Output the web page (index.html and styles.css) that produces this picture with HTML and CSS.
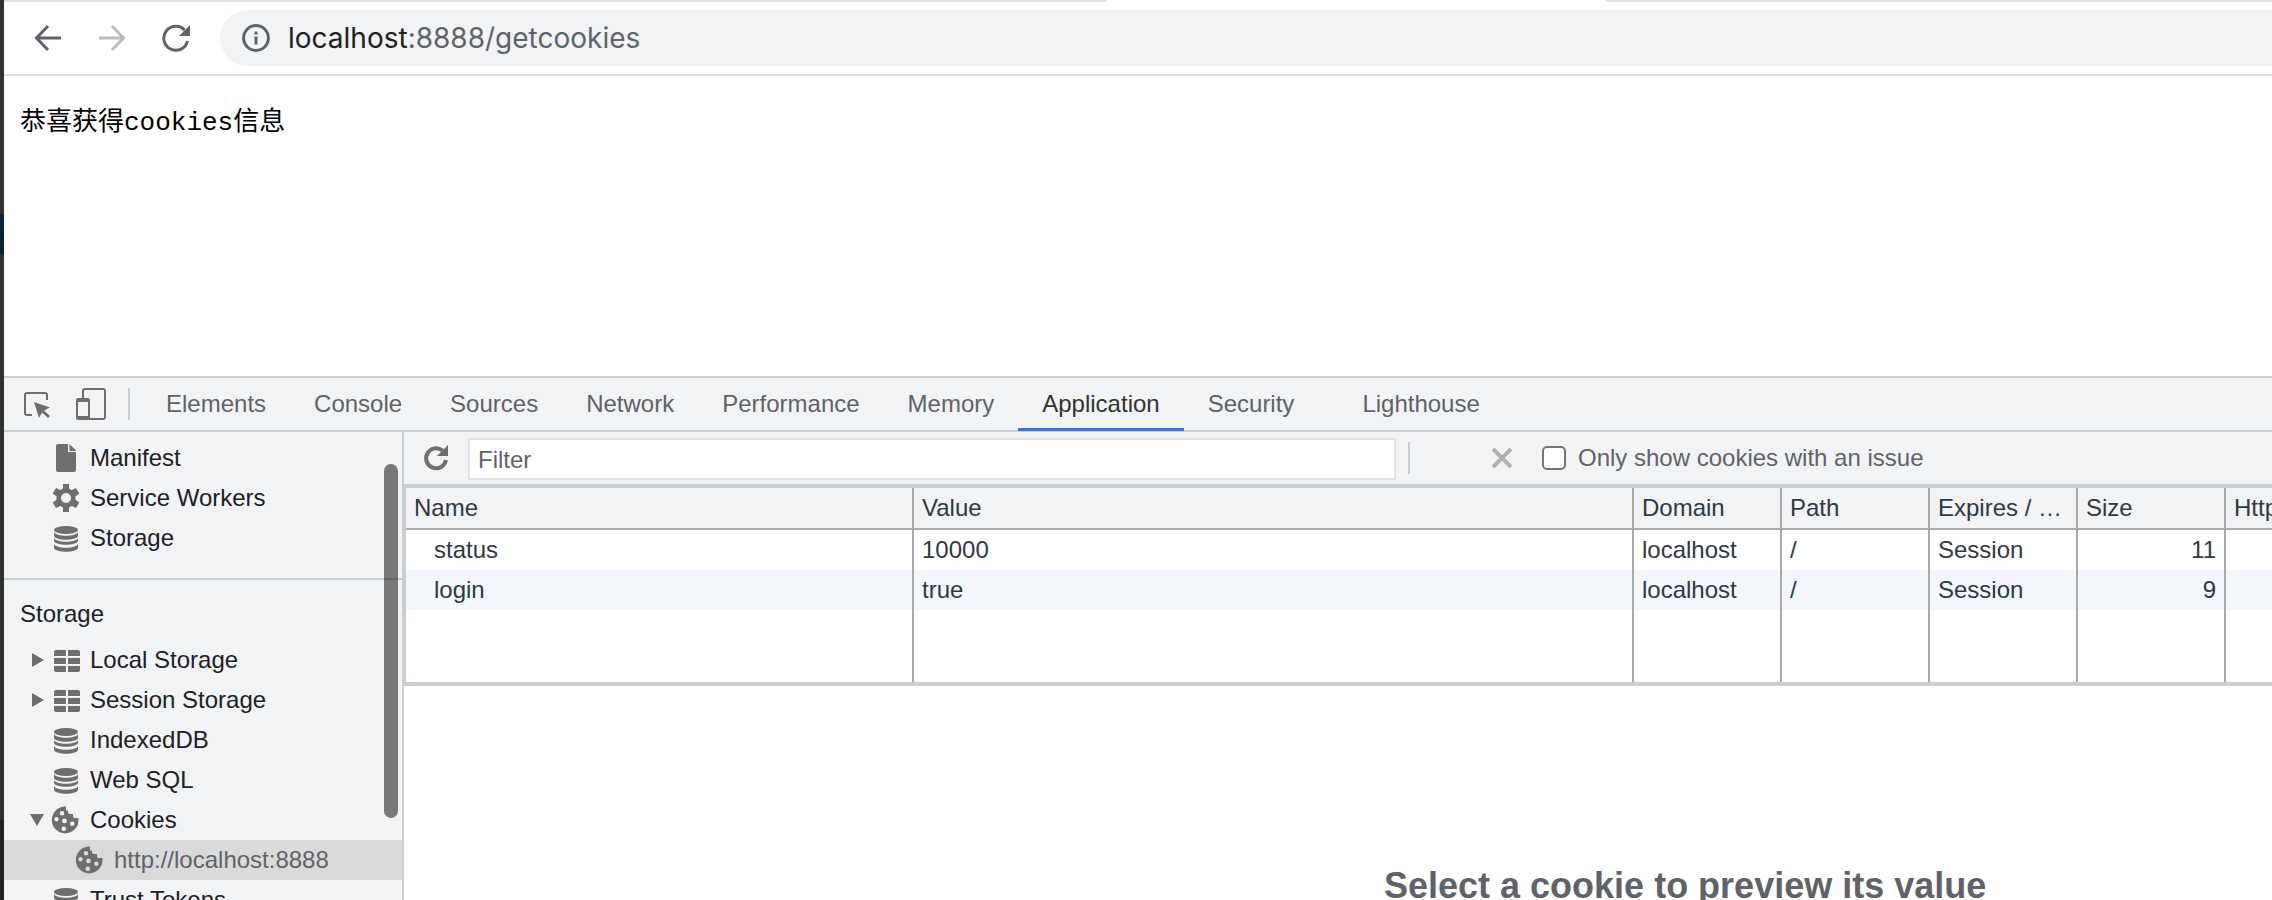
FILE: index.html
```
<!DOCTYPE html>
<html lang="zh-CN">
  <head>
    <meta charset="UTF-8" />
    <meta name="viewport" content="width=device-width, initial-scale=1.0" />
    <title>localhost:8888/getcookies</title>
    <link rel="stylesheet" href="styles.css">
  </head>

  <body>
    <!-- shared icons -->
    <svg class="sprite" aria-hidden="true">
      <symbol id="database" viewBox="0 0 24 26">
        <ellipse cx="12" cy="4" rx="12" ry="4" />
        <path d="M0 6c2 5 22 5 24 0v4c-2 5-22 5-24 0z" />
        <path d="M0 12c2 5 22 5 24 0v3c-2 5-22 5-24 0z" />
        <path d="M0 18c2 5 22 5 24 0v4c-2 5-22 5-24 0z" />
      </symbol>
      <symbol id="table" viewBox="0 0 26 22">
        <path d="M2 0h10v6H0V2q0-2 2-2zM14 0h10q2 0 2 2v4H14zM0 8h12v6H0zM14 8h12v6H14zM0 16h12v6H2q-2 0-2-2zM14 16h12v4q0 2-2 2H14z" />
      </symbol>
      <symbol id="cookie" viewBox="1 0 28 28">
        <path fill-rule="evenodd" d="M15 0.6A13.4 13.4 0 1 0 27.4 12H23q-1 0-1-2V8h-3q-2 0-2-2V4.500h-2zM11 5a2.300 2.300 0 1 1 0 4.600a2.300 2.300 0 1 1 0-4.600zM5.500 11a2.200 2.200 0 1 1 0 4.400a2.200 2.200 0 1 1 0-4.400zM13.500 12.500a2.400 2.400 0 1 1 0 4.800a2.400 2.400 0 1 1 0-4.800zM21.300 15.500a2.200 2.200 0 1 1 0 4.400a2.200 2.200 0 1 1 0-4.400zM12.800 20.500a2.300 2.300 0 1 1 0 4.600a2.300 2.300 0 1 1 0-4.600z" />
      </symbol>
    </svg>

    <div class="desktop"></div>

    <div class="window">
      <div class="tabstrip"><span></span><span></span></div>

      <header class="toolbar">
        <button type="button" class="nav-btn" aria-label="Back">
          <svg width="28" height="28" viewBox="0 0 28 28"><path d="M27 14H3M14 2 2.500 14 14 26" /></svg>
        </button>
        <button type="button" class="nav-btn nav-off" aria-label="Forward" disabled>
          <svg width="28" height="28" viewBox="0 0 28 28"><path d="M1 14h24M14 2l11.500 12L14 26" /></svg>
        </button>
        <button type="button" class="nav-btn" aria-label="Reload">
          <svg width="28" height="28" viewBox="0 0 28 28"><path d="M22.500 6A12 12 0 1 0 25.500 17" /><path class="solid" d="M28 1v11H17z" /></svg>
        </button>
        <div class="omnibox">
          <svg width="28" height="28" viewBox="0 0 28 28"><circle cx="14" cy="14" r="12.400" /><path d="M14 12.500v8M14 7.500v3" /></svg>
          <span class="url"><b>localhost</b>:8888/getcookies</span>
        </div>
      </header>

      <main class="page">
        <pre>恭喜获得cookies信息</pre>
      </main>

      <section class="devtools">
        <nav class="tabs">
          <button type="button" class="tool" aria-label="Inspect">
            <svg width="28" height="28" viewBox="0 0 28 28"><path class="line" d="M10 25H5q-2 0-2-2V5q0-2 2-2h18q2 0 2 2v5" /><path d="M12 12l16 5.500-6 3 6 5.500-2 2-6-5.500-3 5.500z" /></svg>
          </button>
          <button type="button" class="tool" aria-label="Device toolbar">
            <svg width="30" height="32" viewBox="0 0 30 32"><path class="line" d="M7 10V3q0-2 2-2h18q2 0 2 2v26q0 2-2 2H13" /><path fill-rule="evenodd" d="M2 10h10q2 0 2 2v18q0 2-2 2H2q-2 0-2-2V12q0-2 2-2zM2 14v14h10V14z" /></svg>
          </button>
          <i class="divider"></i>
          <button type="button" class="tab">Elements</button>
          <button type="button" class="tab">Console</button>
          <button type="button" class="tab">Sources</button>
          <button type="button" class="tab">Network</button>
          <button type="button" class="tab">Performance</button>
          <button type="button" class="tab">Memory</button>
          <button type="button" class="tab active">Application</button>
          <button type="button" class="tab">Security</button>
          <button type="button" class="tab tab-ext">Lighthouse</button>
        </nav>

        <div class="panels">
          <aside class="sidebar">
            <ul class="tree">
              <li>
                <i class="arrow"></i>
                <svg class="icon" viewBox="0 0 28 28"><path d="M6 0h10v8h8v18q0 2-2 2H6q-2 0-2-2V2q0-2 2-2zM17.500 0L24 6.500V7h-6.500z" /></svg>
                Manifest
              </li>
              <li>
                <i class="arrow"></i>
                <svg class="icon" viewBox="0 0 28 28"><path fill-rule="evenodd" d="M11 0h6v4.500l2.700 1.500 4.300-2 3.300 5.500-3.800 2.700v3.600l3.800 2.700-3.300 5.500-4.300-2-2.700 1.500V28h-6v-4.500L8.300 22 4 24 .7 18.500l3.800-2.700v-3.600L.7 9.500 4 4l4.300 2L11 4.500zM14 9a5 5 0 1 0 0 10a5 5 0 1 0 0-10z" /></svg>
                Service Workers
              </li>
              <li><i class="arrow"></i><svg class="icon"><use href="#database" x="2" y="2" width="24" height="26" /></svg>Storage</li>
            </ul>
            <h2>Storage</h2>
            <ul class="tree">
              <li><i class="arrow closed"></i><svg class="icon"><use href="#table" x="2" y="4" width="26" height="22" /></svg>Local Storage</li>
              <li><i class="arrow closed"></i><svg class="icon"><use href="#table" x="2" y="4" width="26" height="22" /></svg>Session Storage</li>
              <li><i class="arrow"></i><svg class="icon"><use href="#database" x="2" y="2" width="24" height="26" /></svg>IndexedDB</li>
              <li><i class="arrow"></i><svg class="icon"><use href="#database" x="2" y="2" width="24" height="26" /></svg>Web SQL</li>
              <li><i class="arrow open"></i><svg class="icon"><use href="#cookie" width="28" height="28" /></svg>Cookies</li>
              <li class="child selected"><i class="arrow"></i><svg class="icon"><use href="#cookie" width="28" height="28" /></svg>http://localhost:8888</li>
              <li><i class="arrow"></i><svg class="icon"><use href="#database" x="2" y="2" width="24" height="26" /></svg>Trust Tokens</li>
            </ul>
            <div class="thumb"></div>
          </aside>

          <div class="content">
            <div class="filterbar">
              <button type="button" class="tool" aria-label="Refresh">
                <svg width="28" height="28" viewBox="0 0 28 28"><path class="thick" d="M20.500 6.500A10 10 0 1 0 24 16" /><path d="M26 1v11H15z" /></svg>
              </button>
              <input type="text" class="filter" placeholder="Filter" aria-label="Filter" />
              <i class="divider"></i>
              <button type="button" class="tool clear" aria-label="Clear" disabled>
                <svg width="20" height="20" viewBox="0 0 20 20"><path class="thick" d="M1 1l18 18M19 1 1 19" /></svg>
              </button>
              <input type="checkbox" id="issues" />
              <label for="issues">Only show cookies with an issue</label>
            </div>

            <table class="cookies">
              <colgroup>
                <col class="col-name" /><col /><col class="col-sm" /><col class="col-sm" /><col class="col-sm" /><col class="col-sm" /><col class="col-last" />
              </colgroup>
              <thead>
                <tr><th>Name</th><th>Value</th><th>Domain</th><th>Path</th><th>Expires / …</th><th>Size</th><th>HttpOnly</th></tr>
              </thead>
              <tbody>
                <tr><td>status</td><td>10000</td><td>localhost</td><td>/</td><td>Session</td><td class="num">11</td><td></td></tr>
                <tr><td>login</td><td>true</td><td>localhost</td><td>/</td><td>Session</td><td class="num">9</td><td></td></tr>
                <tr class="filler"><td></td><td></td><td></td><td></td><td></td><td></td><td></td></tr>
              </tbody>
            </table>

            <p class="preview">Select a cookie to preview its value</p>
          </div>
        </div>
      </section>
    </div>
  </body>
</html>
```
FILE: styles.css
```
* {
  box-sizing: border-box;
}

body {
  display: flex;
  height: 100vh;
  margin: 0;
  overflow: hidden;
  background: #fff;
  font-family: 'Liberation Sans', 'Noto Sans CJK SC', sans-serif;
  font-size: 24px;
  line-height: 28px;
  color: #202124;
}

button {
  padding: 0;
  border: 0;
  background: none;
  font: inherit;
  color: inherit;
}

svg {
  display: block;
  flex: none;
}

.sprite {
  position: absolute;
  width: 0;
  height: 0;
}

/* sliver of the window behind */
.desktop {
  flex: none;
  width: 4px;
  background: linear-gradient(#2f3030 214px, #0b2233 214px, #0b2233 254px, #2f3030 254px, #2f3030 820px, #24221f 820px);
}

.window {
  flex: 1;
  min-width: 0;
  display: flex;
  flex-direction: column;
}

.tabstrip {
  display: flex;
  justify-content: space-between;
  height: 2px;
}

.tabstrip span {
  width: 1103px;
  background: #dee1e6;
  border-bottom-right-radius: 6px 2px;
}

.tabstrip span:last-child {
  width: 666px;
  border-radius: 0 0 0 6px;
}

/* address bar */
.toolbar {
  display: flex;
  align-items: center;
  gap: 36px;
  height: 74px;
  padding-left: 30px;
  border-bottom: 2px solid #dadce0;
}

.nav-btn svg,
.omnibox svg {
  fill: none;
  stroke: #5f6368;
  stroke-width: 3;
}

.nav-off svg {
  stroke: #babcbe;
}

.nav-btn .solid {
  fill: #5f6368;
  stroke: none;
}

.omnibox {
  flex: 1;
  display: flex;
  align-items: center;
  gap: 18px;
  height: 56px;
  margin-left: -6px;
  padding-left: 22px;
  border-radius: 28px 0 0 28px;
  background: #f1f3f4;
}

.url {
  font-family: Inter, Roboto, sans-serif;
  font-size: 28px;
  line-height: 36px;
  color: #5f6368;
}

.url b {
  font-weight: normal;
  color: #202124;
}

.page {
  height: 300px;
  padding: 0 16px;
}

.page pre {
  margin: 28px 0;
  font-family: 'Liberation Mono', 'Noto Sans CJK SC', monospace;
  font-size: 26px;
  line-height: 38px;
  color: #000;
}

/* devtools */
.devtools {
  flex: 1;
  min-height: 0;
  display: flex;
  flex-direction: column;
  border-top: 2px solid #cacdd1;
}

.tabs {
  flex: none;
  display: flex;
  align-items: center;
  height: 54px;
  padding-left: 18px;
  background: #f1f3f4;
  border-bottom: 2px solid #cacdd1;
}

.tool svg {
  fill: #6e6e6e;
}

.tool .line {
  fill: none;
  stroke: #6e6e6e;
  stroke-width: 2;
}

.tool .thick {
  fill: none;
  stroke: #6e6e6e;
  stroke-width: 4;
}

.tabs .tool + .tool {
  margin-left: 26px;
}

.divider {
  width: 2px;
  height: 32px;
  background: #cacdd1;
}

.tabs .divider {
  margin: 0 12px 0 22px;
}

.tab {
  height: 54px;
  padding: 3px 24px 0;
  border-bottom: 3px solid transparent;
  color: #5f6368;
}

.tab.active {
  color: #333;
  border-bottom-color: #3375e0;
}

.tab-ext {
  margin-left: 20px;
}

.panels {
  flex: 1;
  min-height: 0;
  display: flex;
}

.sidebar {
  position: relative;
  flex: none;
  width: 400px;
  padding-top: 6px;
  overflow: hidden;
  background: #f1f3f4;
  border-right: 2px solid #cacdd1;
}

.sidebar h2 {
  margin: 20px 0 0;
  padding: 20px 16px 12px;
  border-top: 2px solid #cacdd1;
  font-size: 24px;
  font-weight: normal;
}

.tree {
  margin: 0;
  padding: 0;
  list-style: none;
}

.tree li {
  display: flex;
  align-items: center;
  height: 40px;
  padding-left: 26px;
}

.tree .child {
  padding-left: 50px;
}

.tree .selected {
  background: #dadada;
  color: #5f6368;
}

.icon {
  width: 28px;
  height: 28px;
  margin-right: 10px;
  fill: #6e6e6e;
}

.arrow {
  width: 14px;
  margin-right: 8px;
}

.closed,
.open {
  height: 14px;
  background: #6e6e6e;
}

.closed {
  width: 12px;
  margin: 0 8px 0 2px;
  clip-path: polygon(0 0, 100% 50%, 0 100%);
}

.open {
  height: 12px;
  clip-path: polygon(0 0, 100% 0, 50% 100%);
}

.thumb {
  position: absolute;
  top: 32px;
  right: 4px;
  width: 14px;
  height: 354px;
  border-radius: 7px;
  background: rgba(0, 0, 0, 0.5);
}

.content {
  flex: 1;
  min-width: 0;
  overflow: hidden;
}

.filterbar {
  display: flex;
  align-items: center;
  height: 52px;
  padding-left: 18px;
  background: #f1f3f4;
  color: #5f6368;
}

.filter {
  width: calc(50% + 3px);
  height: 42px;
  margin: 2px 12px 0 18px;
  padding: 2px 8px 0;
  border: 2px solid #dfe1e3;
  background: #fff;
  font: inherit;
}

.filter::placeholder {
  color: #5f6368;
}

.filterbar .clear {
  margin: 0 30px 0 82px;
}

.clear .thick {
  stroke: #aeb0b1;
}

.filterbar input[type='checkbox'] {
  appearance: none;
  width: 24px;
  height: 24px;
  margin: 0 12px 0 0;
  border: 2px solid #767676;
  border-radius: 5px;
  background: #fff;
}

.cookies {
  width: 100%;
  table-layout: fixed;
  border-collapse: separate;
  border-spacing: 0;
  border: solid #cacdd1;
  border-width: 4px 0 4px 2px;
  color: #303942;
}

.col-name {
  width: 508px;
}

.col-sm {
  width: 148px;
}

.col-last {
  width: 46px;
}

.cookies th,
.cookies td {
  height: 40px;
  padding: 0 8px;
  border-right: 2px solid #aaa;
  font-weight: normal;
  text-align: left;
  white-space: nowrap;
  overflow: hidden;
  text-overflow: ellipsis;
}

.cookies th {
  height: 42px;
  background: #f1f3f4;
  border-bottom: 2px solid #aaa;
}

.cookies th:last-child,
.cookies td:last-child {
  padding-right: 0;
  border-right: 0;
  text-overflow: clip;
}

.cookies td:first-child {
  padding-left: 28px;
}

.cookies .num {
  text-align: right;
}

.cookies tr:nth-child(even) td {
  background: #f3f6fb;
}

.cookies .filler td {
  height: 72px;
}

.preview {
  margin: 178px 0 0;
  padding-left: 980px;
  font-size: 36px;
  line-height: 44px;
  font-weight: bold;
  white-space: nowrap;
  color: #5f6368;
}
```
